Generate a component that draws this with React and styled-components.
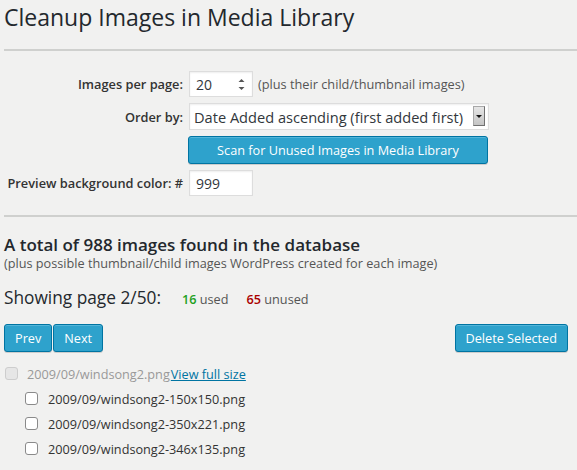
import React from "react";
import styled, { createGlobalStyle } from "styled-components";

const GlobalStyle = createGlobalStyle`
  html, body {
    margin: 0;
    padding: 0;
    background: #f1f1f0;
  }
  body {
    font-family: "Open Sans", "DejaVu Sans", sans-serif;
    color: #444;
    font-size: 12.7px;
  }
`;

const Wrap = styled.div`
  padding: 0 0 20px 4px;
`;

const Title = styled.h1`
  margin: 3px 0 0;
  font-size: 23px;
  line-height: 29px;
  font-weight: 400;
  color: #23282d;
`;

const Rule = styled.hr`
  border: 0;
  height: 2px;
  background: #cfd0ce;
  margin: ${(p) => p.$top}px 0 0;
`;

const FormGrid = styled.div`
  display: grid;
  grid-template-columns: 179px auto;
  column-gap: 6px;
  row-gap: 6px;
  align-items: center;
  justify-items: start;
  margin-top: 20px;
`;

const Label = styled.label`
  justify-self: end;
  font-size: 12.8px;
  font-weight: 600;
  color: #333;
`;

const Control = styled.div`
  display: flex;
  align-items: center;
  gap: 5px;
  position: relative;
`;

const Hint = styled.span`
  font-size: 12.75px;
  color: #555;
`;

const TextInput = styled.input`
  box-sizing: border-box;
  width: 64px;
  height: 26px;
  padding: 3px 6px;
  border: 1px solid #ddd;
  background: #fff;
  box-shadow: inset 0 1px 2px rgba(0, 0, 0, 0.07);
  font-family: inherit;
  font-size: 14px;
  color: #32373c;
  outline: none;
  appearance: textfield;
  &::-webkit-outer-spin-button,
  &::-webkit-inner-spin-button {
    -webkit-appearance: none;
    margin: 0;
  }
`;

const Spinner = styled.svg`
  position: absolute;
  left: 49px;
  top: 7px;
  pointer-events: none;
`;

const SelectBox = styled.div`
  position: relative;
  width: 300px;
`;

const Select = styled.select`
  box-sizing: border-box;
  width: 300px;
  height: 27px;
  padding: 2px 20px 2px 4px;
  border: 1px solid #ddd;
  background: #fff;
  box-shadow: inset 0 1px 2px rgba(0, 0, 0, 0.07);
  font-family: inherit;
  font-size: 14.6px;
  color: #32373c;
  appearance: none;
  outline: none;
`;

const ArrowBox = styled.span`
  position: absolute;
  right: 4px;
  top: 3px;
  width: 12px;
  height: 20px;
  box-sizing: border-box;
  background: linear-gradient(#e6e6e6, #c4c4c4);
  border: 1px solid #a8a8a8;
  border-right-color: #707070;
  border-bottom-color: #707070;
  display: flex;
  align-items: center;
  justify-content: center;
  pointer-events: none;
  &::after {
    content: "";
    border-left: 3px solid transparent;
    border-right: 3px solid transparent;
    border-top: 3px solid #111;
  }
`;

const Button = styled.button`
  box-sizing: border-box;
  height: 28px;
  padding: 0 10px 1px;
  width: ${(p) => (p.$wide ? "300px" : "auto")};
  margin-left: ${(p) => (p.$wide ? "-1px" : "0")};
  border: 1px solid #0074a2;
  border-radius: 3px;
  background: #2ea2cc;
  box-shadow: inset 0 1px 0 rgba(120, 200, 230, 0.5),
    0 1px 0 rgba(0, 0, 0, 0.15);
  color: #fff;
  font-family: inherit;
  font-size: 12.7px;
  line-height: 26px;
  cursor: pointer;
`;

const Heading = styled.h2`
  margin: 18px 0 0;
  font-size: 17px;
  line-height: 20px;
  font-weight: 600;
  color: #23282d;
`;

const SubText = styled.p`
  margin: 0;
  font-size: 12.7px;
  line-height: 16px;
  color: #555;
`;

const PageLine = styled.h3`
  margin: 16px 0 0;
  font-size: 17.3px;
  line-height: 22px;
  font-weight: 500;
  color: #23282d;
`;

const Count = styled.span`
  margin-left: ${(p) => p.$gap}px;
  font-size: 12.7px;
  font-weight: 400;
  color: #555;
  b {
    font-weight: 600;
    color: ${(p) => p.$color};
  }
`;

const ButtonRow = styled.div`
  display: flex;
  align-items: center;
  justify-content: space-between;
  margin-top: 14px;
  padding-right: 9px;
`;

const Group = styled.div`
  display: flex;
  gap: 1px;
`;

const FileList = styled.ul`
  list-style: none;
  margin: 9px 0 0;
  padding: 0;
`;

const FileRow = styled.li`
  display: flex;
  align-items: center;
  height: 25px;
  padding-left: ${(p) => (p.$child ? 21 : 1)}px;
  font-size: 12.7px;
  color: ${(p) => (p.$muted ? "#999" : "#333")};
`;

const Check = styled.input`
  appearance: none;
  box-sizing: border-box;
  width: 13px;
  height: 13px;
  margin: 0 ${(p) => (p.$child ? 10 : 9)}px 0 0;
  border: 1px solid #8a8a8a;
  border-radius: 3px;
  background: #fff;
  &:disabled {
    background: #e6e6e6;
    border-color: #cdcdcd;
  }
`;

const FullLink = styled.a`
  margin-left: 1px;
  color: #0074a2;
  text-decoration: underline;
`;

const children = [
  "2009/09/windsong2-150x150.png",
  "2009/09/windsong2-350x221.png",
  "2009/09/windsong2-346x135.png",
];

export default function App() {
  return (
    <Wrap>
      <GlobalStyle />
      <Title>Cleanup Images in Media Library</Title>
      <Rule $top={17} />

      <FormGrid>
        <Label>Images per page:</Label>
        <Control>
          <TextInput type="number" defaultValue="20" />
          <Spinner width="7" height="13" viewBox="0 0 7 13">
            <path d="M0.5 4 L3.5 1 L6.5 4 Z" fill="#555" />
            <path d="M0.5 9 L3.5 12 L6.5 9 Z" fill="#555" />
          </Spinner>
          <Hint>(plus their child/thumbnail images)</Hint>
        </Control>

        <Label>Order by:</Label>
        <SelectBox>
          <Select defaultValue="asc">
            <option value="asc">Date Added ascending (first added first)</option>
            <option value="desc">Date Added descending (last added first)</option>
          </Select>
          <ArrowBox />
        </SelectBox>

        <span />
        <Button $wide>Scan for Unused Images in Media Library</Button>

        <Label>Preview background color: #</Label>
        <TextInput type="text" defaultValue="999" />
      </FormGrid>

      <Rule $top={19} />

      <Heading>A total of 988 images found in the database</Heading>
      <SubText>
        (plus possible thumbnail/child images WordPress created for each image)
      </SubText>

      <PageLine>
        Showing page 2/50:
        <Count $gap={21} $color="#22a022">
          <b>16</b> used
        </Count>
        <Count $gap={18} $color="#a00">
          <b>65</b> unused
        </Count>
      </PageLine>

      <ButtonRow>
        <Group>
          <Button>Prev</Button>
          <Button>Next</Button>
        </Group>
        <Button>Delete Selected</Button>
      </ButtonRow>

      <FileList>
        <FileRow $muted>
          <Check type="checkbox" disabled />
          2009/09/windsong2.png
          <FullLink href="#">View full size</FullLink>
        </FileRow>
        {children.map((name) => (
          <FileRow key={name} $child>
            <Check type="checkbox" $child />
            {name}
          </FileRow>
        ))}
      </FileList>
    </Wrap>
  );
}
